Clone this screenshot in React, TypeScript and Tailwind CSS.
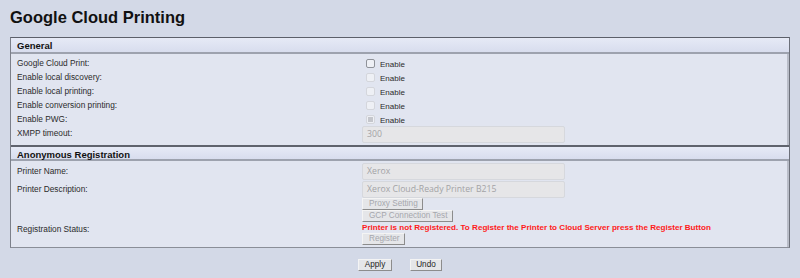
import React from 'react';

const labelCls = 'w-[351px] shrink-0 pl-[6px] text-[8.3px] text-[#2b2b2b]';

const Check = ({ enabled, checked }: { enabled?: boolean; checked?: boolean }) => (
  <span
    className={`ml-[4px] mr-[5px] flex h-[9px] w-[9px] shrink-0 items-center justify-center rounded-[2px] border bg-[#eef0f5] ${
      enabled ? 'border-[#8f9299]' : 'border-[#d4d6dc]'
    }`}
  >
    {checked && <span className="h-[5px] w-[5px] bg-[#c4c6cc]" />}
  </span>
);

const CheckRow = ({ label, enabled, checked }: { label: string; enabled?: boolean; checked?: boolean }) => (
  <div className="flex h-[14px]">
    <div className={`${labelCls} pt-[2px]`}>{label}</div>
    <div className="flex items-center pt-[2px]">
      <Check enabled={enabled} checked={checked} />
      <span className="pt-[3px] text-[8px] text-[#2b2b2b]">Enable</span>
    </div>
  </div>
);

const TextBox = ({ value }: { value: string }) => (
  <div className="flex h-[17px] w-[203px] items-center rounded-[2px] border border-[#d6d8dd] bg-[#e6e6e8] pl-[4px] font-['Open_Sans'] text-[8.7px] text-[#a3a3a6]">
    {value}
  </div>
);

const Btn = ({ children, disabled, className = '' }: { children: React.ReactNode; disabled?: boolean; className?: string }) => (
  <button
    className={`flex h-[12px] items-center border border-t-[#f4f4f4] border-l-[#f4f4f4] border-r-[#8c8c8c] border-b-[#8c8c8c] bg-[#e5e6e9] text-[8.2px] leading-none ${
      disabled ? 'pl-[6px] text-[#a5a7ad]' : 'justify-center text-[#1e1e1e]'
    } ${className}`}
  >
    {children}
  </button>
);

const SectionHeader = ({ title, first }: { title: string; first?: boolean }) => (
  <div
    className={`h-[16px] border-b-2 border-b-[#9da2ae] bg-gradient-to-b from-[#e6eaf6] to-[#d8ddee] pl-[6px] pt-[1px] text-[9.5px] font-bold text-[#111] ${
      first ? '' : 'border-t-2 border-t-[#5f636d]'
    }`}
  >
    {title}
  </div>
);

export default function App() {
  return (
    <div className="h-[278px] w-full overflow-hidden bg-[#d3d9e7] px-[10px] font-['Liberation_Sans',Arial,sans-serif]">
      <h1 className="pt-[7px] text-[16.5px] font-bold leading-[20px] text-[#111]">Google Cloud Printing</h1>

      <div className="mt-[10px] border border-t-[#5c606a] border-l-[#7c808a] border-r-[#6c707a] border-b-[#8a8e98] bg-[#e1e5f0] shadow-[inset_-2px_0_0_#b9bdc8]">
        <SectionHeader title="General" first />
        <div className="pt-[1px]">
          <CheckRow label="Google Cloud Print:" enabled />
          <CheckRow label="Enable local discovery:" />
          <CheckRow label="Enable local printing:" />
          <CheckRow label="Enable conversion printing:" />
          <CheckRow label="Enable PWG:" checked />
          <div className="flex h-[20px] pt-[1px]">
            <div className={`${labelCls} pt-[1px]`}>XMPP timeout:</div>
            <TextBox value="300" />
          </div>
        </div>

        <SectionHeader title="Anonymous Registration" />
        <div className="pb-[2px] pt-[2px]">
          <div className="flex">
            <div className={`${labelCls} pt-[2px]`}>Printer Name:</div>
            <TextBox value="Xerox" />
          </div>
          <div className="mt-[1px] flex">
            <div className={`${labelCls} pt-[2px]`}>Printer Description:</div>
            <TextBox value="Xerox Cloud-Ready Printer B215" />
          </div>
          <div className="flex">
            <div className={labelCls} />
            <div className="flex flex-col items-start">
              <Btn disabled className="w-[61px]">Proxy Setting</Btn>
              <Btn disabled className="w-[91px]">GCP Connection Test</Btn>
            </div>
          </div>
          <div className="flex">
            <div className={`${labelCls} pt-[1px]`}>Registration Status:</div>
            <div className="flex flex-col items-start">
              <div className="h-[11px] pt-[1px] text-[8.1px] font-bold leading-[10px] text-[#ff1a1a]">
                Printer is not Registered. To Register the Printer to Cloud Server press the Register Button
              </div>
              <Btn disabled className="w-[43px]">Register</Btn>
            </div>
          </div>
        </div>
      </div>

      <div className="mt-[11px] flex justify-center gap-[18px]">
        <Btn className="w-[34px]">Apply</Btn>
        <Btn className="w-[32px]">Undo</Btn>
      </div>
    </div>
  );
}
